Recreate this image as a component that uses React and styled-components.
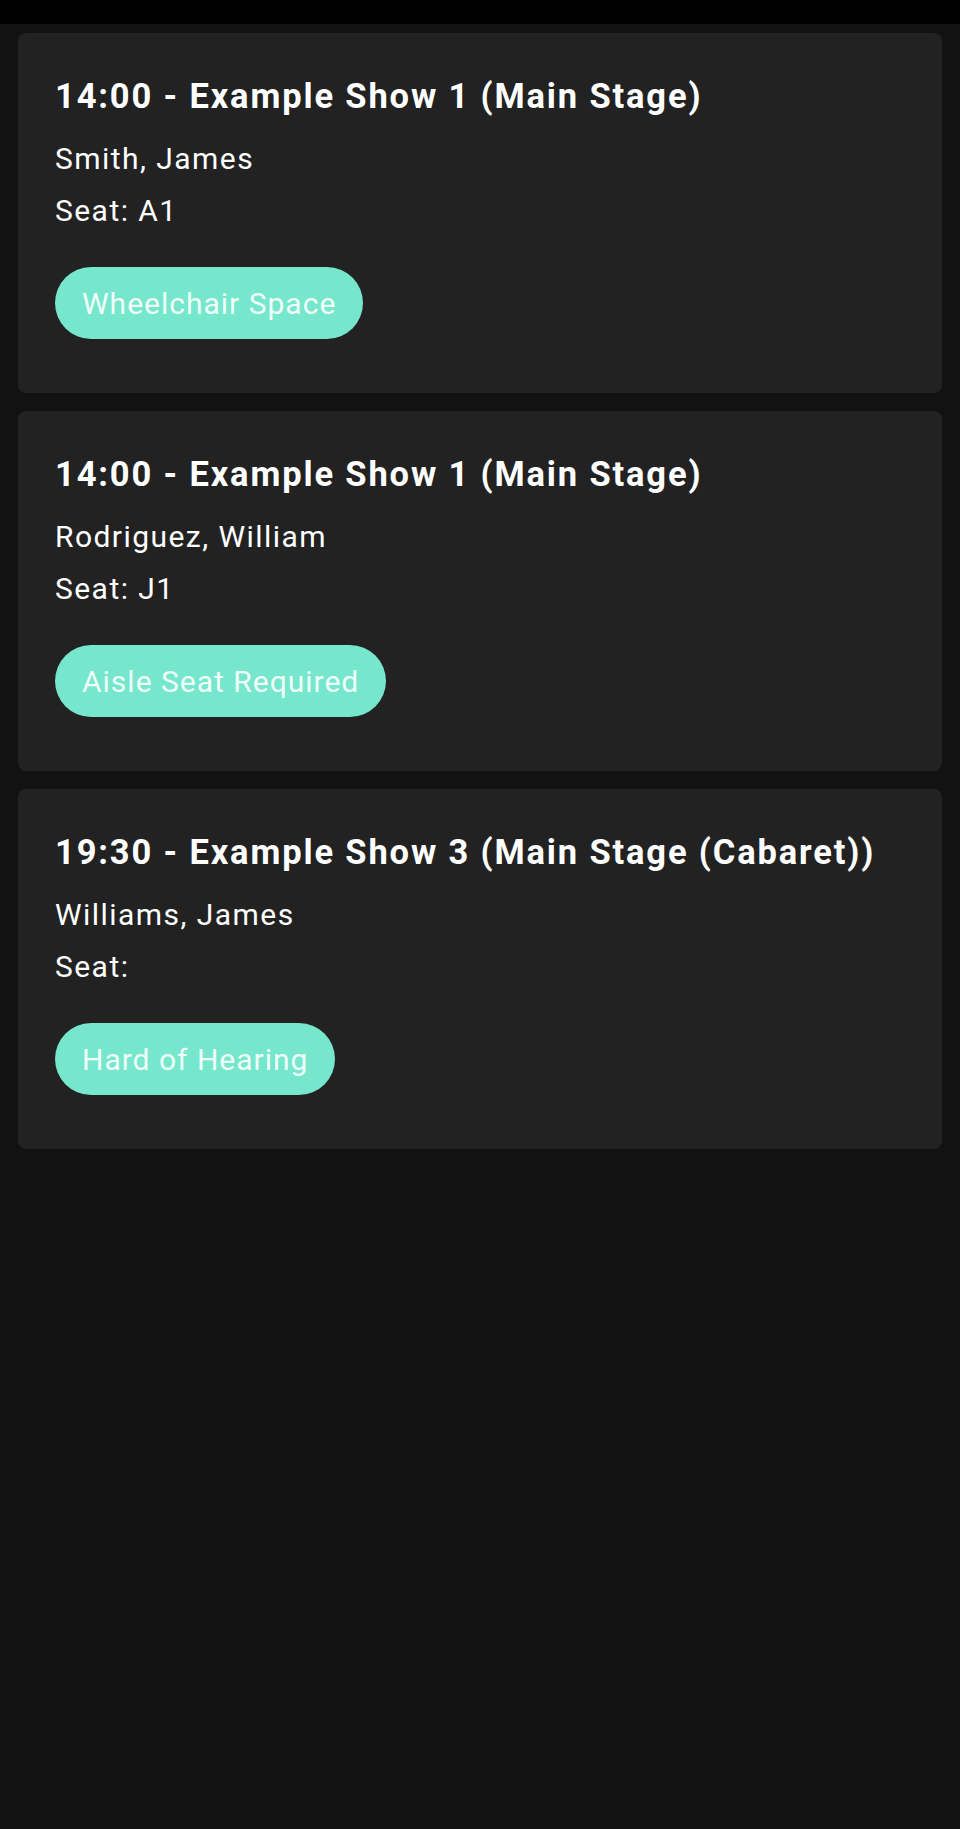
import React from 'react';
import styled, { createGlobalStyle } from 'styled-components';

const bookings = [
  {
    id: 1,
    title: '14:00 - Example Show 1 (Main Stage)',
    name: 'Smith, James',
    seat: 'A1',
    need: 'Wheelchair Space',
  },
  {
    id: 2,
    title: '14:00 - Example Show 1 (Main Stage)',
    name: 'Rodriguez, William',
    seat: 'J1',
    need: 'Aisle Seat Required',
  },
  {
    id: 3,
    title: '19:30 - Example Show 3 (Main Stage (Cabaret))',
    name: 'Williams, James',
    seat: '',
    need: 'Hard of Hearing',
  },
];

const App = () => (
  <>
    <GlobalStyle />
    <StatusBar />
    <StyledList>
      {bookings.map((b) => (
        <StyledCard key={b.id}>
          <CardTitle>{b.title}</CardTitle>
          <CardLine>{b.name}</CardLine>
          <CardLine>Seat: {b.seat}</CardLine>
          <NeedChip>{b.need}</NeedChip>
        </StyledCard>
      ))}
    </StyledList>
  </>
);

const GlobalStyle = createGlobalStyle`
  html, body {
    margin: 0;
    padding: 0;
    background-color: #121212;
    font-family: Roboto, 'Liberation Sans', sans-serif;
    min-height: 100%;
  }
`;

const StatusBar = styled.div`
  height: 24px;
  background-color: #000;
`;

const StyledList = styled.div`
  display: flex;
  flex-direction: column;
  gap: 18px;
  padding: 9px 18px;
  min-height: 1805px;
  box-sizing: border-box;
`;

const StyledCard = styled.div`
  display: flex;
  flex-direction: column;
  align-items: flex-start;
  background-color: #222222;
  border-radius: 8px;
  padding: 43px 37px 54px;
`;

const CardTitle = styled.h2`
  margin: 0 0 17px;
  font-size: 34.5px;
  line-height: 40px;
  font-weight: 700;
  letter-spacing: 1.85px;
  color: #fff;
`;

const CardLine = styled.p`
  margin: 0;
  font-size: 30px;
  line-height: 52px;
  letter-spacing: 1.45px;
  color: #fff;
`;

const NeedChip = styled.span`
  display: inline-flex;
  align-items: center;
  height: 72px;
  margin-top: 30px;
  padding: 0 27px;
  border-radius: 36px;
  background-color: #76e6cc;
  color: #effffa;
  font-size: 30px;
  letter-spacing: 1px;
`;

export default App;
